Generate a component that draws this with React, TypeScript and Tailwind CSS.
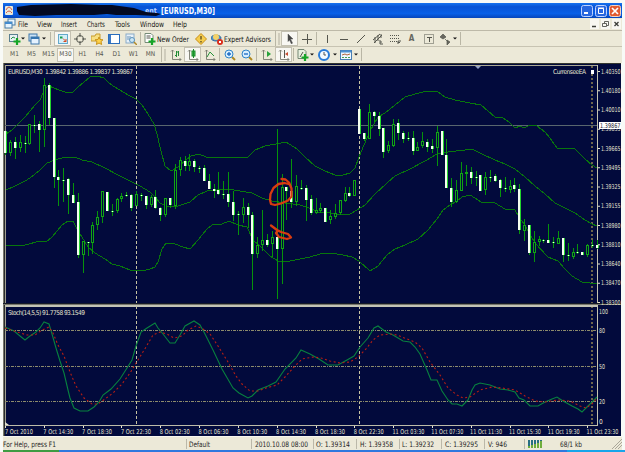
import React from "react";

type Candle = [number, number, number, number, 0 | 1];

// Each candle: high, body top, body bottom, low, filled.
const candles: Candle[] = [
  [131, 131, 153, 155, 1], [140, 142, 153, 156, 0], [137, 142, 148, 159, 1], [135, 142, 148, 152, 0],
  [136, 143, 144, 153, 1], [124, 124, 144, 145, 0], [115, 125, 126, 133, 1], [121, 124, 130, 152, 1],
  [78, 85, 130, 147, 0], [83, 85, 118, 125, 1], [118, 118, 177, 188, 1], [170, 177, 180, 206, 1],
  [168, 180, 181, 202, 1], [178, 179, 195, 214, 1], [183, 195, 203, 203, 1], [193, 202, 255, 258, 1],
  [241, 241, 255, 273, 0], [242, 242, 243, 256, 1], [222, 225, 243, 254, 0], [211, 217, 225, 230, 0],
  [191, 191, 217, 223, 0], [192, 192, 211, 211, 1], [204, 211, 212, 216, 1], [198, 199, 211, 213, 0],
  [193, 196, 199, 202, 0], [192, 195, 196, 197, 1], [194, 195, 208, 211, 1], [191, 194, 206, 206, 0],
  [193, 195, 196, 201, 1], [196, 196, 205, 209, 1], [195, 197, 205, 207, 0], [190, 197, 208, 209, 1],
  [207, 208, 215, 221, 1], [198, 198, 215, 217, 0], [198, 198, 205, 208, 1], [164, 170, 206, 209, 0],
  [157, 160, 170, 176, 0], [156, 161, 166, 171, 1], [154, 161, 166, 171, 0], [159, 161, 167, 172, 1],
  [166, 168, 169, 173, 1], [165, 168, 181, 181, 1], [174, 181, 189, 189, 1], [184, 189, 191, 198, 1],
  [172, 190, 194, 195, 1], [181, 194, 195, 199, 1], [172, 194, 202, 207, 1], [191, 202, 215, 221, 1],
  [211, 214, 215, 235, 1], [198, 207, 215, 223, 0], [203, 207, 215, 228, 1], [212, 215, 254, 290, 1],
  [237, 245, 254, 258, 0], [210, 240, 245, 251, 0], [234, 240, 245, 247, 1], [231, 237, 244, 257, 0],
  [129, 237, 249, 299, 1], [174, 187, 249, 284, 0], [187, 187, 191, 220, 1], [159, 191, 202, 208, 1],
  [175, 186, 202, 206, 0], [180, 188, 189, 190, 1], [185, 188, 200, 221, 1], [195, 199, 213, 215, 1],
  [198, 210, 213, 214, 0], [203, 208, 211, 213, 0], [208, 208, 222, 222, 1], [210, 216, 220, 224, 0],
  [204, 213, 217, 219, 0], [200, 200, 213, 215, 0], [187, 193, 201, 202, 0], [187, 193, 196, 197, 1],
  [180, 180, 196, 196, 0], [109, 109, 134, 134, 1], [133, 133, 139, 141, 1], [104, 112, 139, 139, 0],
  [111, 112, 116, 122, 1], [112, 116, 129, 136, 1], [128, 128, 152, 158, 1], [141, 145, 151, 153, 0],
  [119, 124, 146, 147, 0], [119, 123, 133, 140, 1], [131, 133, 139, 143, 1], [132, 138, 139, 141, 1],
  [131, 138, 151, 155, 1], [142, 147, 151, 151, 0], [132, 141, 146, 148, 0], [139, 142, 147, 152, 1],
  [139, 146, 149, 153, 1], [126, 132, 148, 166, 0], [131, 131, 155, 155, 1], [139, 155, 188, 188, 1],
  [178, 188, 202, 207, 1], [180, 190, 202, 203, 0], [162, 173, 191, 191, 0], [165, 172, 174, 186, 0],
  [167, 172, 178, 184, 1], [171, 177, 178, 186, 1], [175, 175, 191, 191, 1], [172, 177, 190, 195, 0],
  [170, 177, 178, 182, 1], [174, 176, 181, 182, 1], [179, 180, 188, 197, 1], [177, 188, 189, 192, 1],
  [180, 186, 190, 193, 0], [178, 185, 189, 192, 1], [184, 189, 230, 234, 1], [219, 225, 231, 241, 0],
  [225, 225, 253, 255, 1], [231, 242, 253, 262, 0], [236, 239, 242, 246, 0], [239, 240, 241, 243, 1],
  [224, 240, 243, 243, 1], [237, 242, 243, 248, 1], [231, 238, 244, 244, 0], [238, 238, 255, 262, 1],
  [243, 255, 256, 261, 1], [248, 252, 257, 259, 0], [244, 252, 253, 254, 1], [252, 252, 255, 255, 1],
  [244, 245, 255, 257, 0], [240, 245, 246, 248, 1], [240, 245, 248, 249, 1],
];

const upper = "6,134 12,130 18,124 25,117 30,111 36,104 40,100 43,93 45,88 49,86 54,88 59,90 65,92 73,92 78,87 84,82 90,77 97,76 104,78 108,82 113,86 120,90 128,95 136,99 142,105 148,114 154,124 157,134 160,147 165,166 171,171 178,167 186,160 191,156 199,154 206,157 218,157 230,158 248,157 255,150 265,146 276,144 286,142 297,149 305,157 315,166 325,171 335,175 343,175 350,173 355,168 359,157 364,145 370,131 378,117 385,113 395,105 405,97 415,94 427,91 437,91 445,97 455,100 470,103 481,105 488,111 495,117 503,118 509,122 515,128 520,126 524,128 530,125 537,126 545,132 550,138 554,144 558,149 570,148 575,149 585,159 592,165 597,168";
const middle = "6,190 15,186 25,181 30,178 40,170 47,163 55,160 65,157 75,157 82,160 92,162 105,168 118,175 130,181 140,186 150,192 155,197 160,203 167,206 178,206 190,202 198,195 207,191 217,190 228,189 240,191 252,193 262,198 272,201 285,203 300,205 312,209 318,212 330,213 340,215 350,214 357,210 365,205 375,194 387,183 395,176 410,169 425,161 437,154 448,152 465,150 472,149 482,154 495,160 505,164 515,169 525,177 535,186 545,194 555,203 565,208 575,213 585,220 592,224 597,226";
const lower = "6,245 13,246 25,245 40,241 46,242 52,237 62,225 68,221 73,221 77,229 82,237 88,247 95,253 105,259 112,264 120,266 130,270 142,271 150,269 155,267 158,262 162,249 166,243 175,244 183,247 190,249 198,240 207,229 212,225 222,224 229,221 238,225 247,227 253,240 262,248 270,256 278,261 290,261 300,259 310,257 320,254 330,253 343,255 352,257 359,261 370,271 378,266 387,255 395,249 405,245 418,239 428,230 437,219 443,210 450,205 457,201 462,197 470,195 475,198 481,202 495,203 505,209 515,210 519,217 525,225 535,243 548,257 558,261 565,269 572,276 582,282 590,283 597,284";
const stochMain = "5,327 14,331 20,336 25,340 30,336 36,332 40,328 44,322 49,324 52,334 56,348 60,361 64,373 68,390 70,398 74,408 80,411 88,411 94,407 99,402 103,395 111,389 120,379 127,368 132,360 136,346 141,332 147,328 155,323 158,328 163,334 170,343 175,343 180,335 185,326 194,321 200,325 205,334 213,350 222,369 233,388 239,393 248,398 252,396 258,390 268,386 276,382 285,369 296,358 301,350 310,354 319,359 328,365 338,365 347,360 354,356 360,347 368,338 374,328 378,326 386,332 393,335 403,341 410,342 415,347 420,354 427,370 431,380 437,380 442,391 448,400 452,404 457,404 462,406 468,400 472,390 475,385 480,383 490,385 500,389 508,390 515,392 519,398 524,400 530,406 538,406 545,402 552,399 557,397 563,401 572,406 578,409 582,412 587,407 592,402 597,397";
const stochSignal = "5,328 17,332 27,335 35,335 42,330 49,327 53,333 58,345 64,356 70,372 76,386 84,398 92,404 98,404 105,399 113,393 122,384 130,373 138,360 146,347 153,335 160,332 167,334 174,338 182,336 188,330 196,326 203,329 210,334 218,346 228,362 236,376 242,384 250,391 258,391 266,388 277,385 285,377 294,367 302,359 313,357 321,358 330,361 340,363 350,362 358,357 366,349 373,340 380,335 390,334 397,335 407,339 415,342 422,348 430,362 440,375 448,388 457,395 463,398 470,397 480,390 492,387 502,388 515,390 525,396 535,401 545,402 558,400 570,401 580,406 586,408 592,404 597,398";

const prices = ["1.40350", "1.40180", "1.40010", "1.39835", "1.39665", "1.39495", "1.39325", "1.39155", "1.38980", "1.38810", "1.38640", "1.38470", "1.38300"];
const times = ["7 Oct 2010", "7 Oct 14:30", "7 Oct 18:30", "7 Oct 22:30", "8 Oct 02:30", "8 Oct 06:30", "8 Oct 10:30", "8 Oct 14:30", "8 Oct 18:30", "8 Oct 22:30", "11 Oct 03:30", "11 Oct 07:30", "11 Oct 11:30", "11 Oct 15:30", "11 Oct 19:30", "11 Oct 23:30"];

function Chart() {
  return (
    <svg width="618" height="373" viewBox="3 63 618 373" className="block shrink-0 overflow-visible" fontFamily="'DejaVu Sans Condensed','DejaVu Sans',sans-serif" fontSize="6.6" fill="#e4e2d0">
      <rect x="3" y="63" width="618" height="373" fill="#020a3c" />
      <g shapeRendering="crispEdges">
        <rect x="3" y="63" width="618" height="1" fill="#33362f" />
        <rect x="3" y="63" width="1" height="373" fill="#77776d" />
        <rect x="4" y="64" width="1" height="372" fill="#292c2c" />
        <rect x="5" y="65" width="593" height="1" fill="#aaa894" />
        <rect x="5" y="65" width="1" height="361" fill="#a09f90" />
        <rect x="597" y="65" width="1" height="361" fill="#c6c4ae" />
        <rect x="5" y="125" width="592" height="1" fill="#59666e" />
        <path d="M136.500 66V425M359.500 66V425" stroke="#c6c2a2" strokeDasharray="3 2" />
        <path d="M592 66V425" stroke="#6d654c" strokeWidth="2" strokeDasharray="2 2" />
        <path d="M5 330.500H597M5 366.500H597M5 401.500H597" stroke="#8c8b6c" strokeDasharray="3 1 1 1" />
        <g fill="none" stroke="#08760d">
          <polyline points={upper} />
          <polyline points={middle} />
          <polyline points={lower} />
        </g>
        {candles.map(([hi, top, bottom, lo, filled], i) => {
          const x = Math.floor(5.6 + i * 4.85);
          const height = Math.max(1, bottom - top);
          return (
            <g key={i}>
              <rect x={x} y={hi} width="1" height={lo - hi} fill="#06930b" />
              {filled ? (
                <>
                  <rect x={x - 1} y={top} width="3" height={height} fill="#22d52c" />
                  <rect x={height > 1 ? x - 1 : x} y={top} width={height > 1 ? 2 : 1} height={height} fill="#f5fff0" />
                </>
              ) : (
                <rect x={x - 0.5} y={top + 0.5} width="2" height={height - 1} fill="#020a3c" stroke="#10a513" />
              )}
            </g>
          );
        })}
        <rect x="3" y="303" width="618" height="1" fill="#151a28" />
        <rect x="3" y="304" width="618" height="1" fill="#77776c" />
        <rect x="5" y="305" width="593" height="2" fill="#c3c4b5" />
        <rect x="5" y="425" width="593" height="1" fill="#bdbca8" />
      </g>
      <polyline points={stochMain} fill="none" stroke="#08813f" strokeWidth="1.100" />
      <polyline points={stochSignal} fill="none" stroke="#b61e14" strokeWidth="1.100" strokeDasharray="2 2.500" />
      <g fill="none" stroke="#d83c10" strokeWidth="2.300" strokeLinecap="round" strokeLinejoin="round">
        <path d="M281.500 179l4 .5 3.500 3 2.500 6v8l-3.500 4-7 3-6 1.500-4-1-1-4 .5-6 3-6 5-4 6-1 4 1" />
        <path d="M271 225.500l6 4.500 4 2 7 2 3 3.500-4 1.500-8-2-3-4 2-2.500" />
      </g>
      <text x="8" y="74" textLength="125" xmlSpace="preserve">EURUSD,M30  1.39842 1.39886 1.39837 1.39867</text>
      <text x="553" y="74" textLength="33">CurrenseeEA</text>
      <rect x="591" y="70" width="3" height="4" fill="#fff" shapeRendering="crispEdges" />
      <path d="M475 66h6l-3 3z" fill="#95a3c5" />
      {prices.map((price, i) => (
        <g key={price}>
          <rect x="598" y={71 + i * 19.25} width="2" height="1" />
          <text x="601" y={73.5 + i * 19.25} textLength="19.500" lengthAdjust="spacingAndGlyphs">{price}</text>
        </g>
      ))}
      <rect x="599" y="122" width="22" height="7" fill="#fff" />
      <text x="600" y="127.800" textLength="20.500" lengthAdjust="spacingAndGlyphs" fill="#15172d">1.39867</text>
      <text x="8" y="315" textLength="77">Stoch(14,5,5) 91.7758 93.1549</text>
      <text x="599" y="313.500" textLength="9" lengthAdjust="spacingAndGlyphs">100</text>
      <text x="599" y="332.500" textLength="6" lengthAdjust="spacingAndGlyphs">80</text>
      <text x="599" y="368.500" textLength="6" lengthAdjust="spacingAndGlyphs">50</text>
      <text x="599" y="403.500" textLength="6" lengthAdjust="spacingAndGlyphs">20</text>
      <text x="599" y="424">0</text>
      <path d="M5 422l4 3h-4z" />
      {times.map((time, i) => (
        <g key={time}>
          <rect x={Math.floor(5.6 + i * 38.8)} y="426" width="1" height="2" />
          <text x={(i === 0 ? 5 : 4.5) + i * 38.8} y="433.500" textLength={i === 0 ? 28 : i > 9 ? 32 : 30} lengthAdjust="spacingAndGlyphs">{time}</text>
        </g>
      ))}
    </svg>
  );
}

function Icon({ children, w = "w-[17px]", pressed = false }: { children: React.ReactNode; w?: string; pressed?: boolean }) {
  return (
    <span className={`${w} flex h-[15px] shrink-0 items-center justify-center ${pressed ? "border border-[#c4c1b2] bg-[#f8f7f2]" : ""}`}>
      <svg width="12" height="12" viewBox="0 0 12 12" className="shrink-0" fill="none" stroke="#55564e">{children}</svg>
    </span>
  );
}

const Arrow = () => (
  <span className="flex w-[4px] shrink-0 justify-center"><svg width="4" height="3"><path d="M0 .5h4l-2 2z" fill="#111" /></svg></span>
);
const Sep = ({ w = "w-[3px]" }: { w?: string }) => (
  <span className={`${w} flex shrink-0 justify-center`}><span className="h-[13px] w-px bg-[#b9b6a5]" /></span>
);
const Grip = ({ w = "w-[8px]" }: { w?: string }) => (
  <span className={`${w} flex shrink-0 items-center justify-center gap-[2px]`}>
    <span className="h-[15px] w-px bg-[#b9b6a5]" /><span className="h-[12px] w-[2px] bg-[#cfccbc]" />
  </span>
);

const Plus = () => <path d="M8 5v7M4.500 8.500h7" stroke="#16a526" strokeWidth="2.200" />;
const Axes = () => <path d="M2.500 1v9.500H11M1 2.500l1.500-1.500L4 2.500M9.500 9l1.500 1.500L9.500 12" stroke="#77786d" strokeWidth=".9" />;

function Lens({ sign }: { sign: string }) {
  return <><path d="M8 8l3 3" stroke="#b08a20" strokeWidth="2" /><circle cx="5" cy="5" r="4" fill="#d8efff" stroke="#3184c8" /><path d={sign} stroke="#1968c2" strokeWidth="1.300" /></>;
}

function DrawingTools() {
  return (
    <div className="flex h-4 shrink-0 items-center border-t border-[#bdb9a8] pl-[5px]">
      <Icon w="w-[13px]"><rect x=".5" y="1.500" width="8" height="7" fill="#e8f1f3" stroke="#5b8090" /><path d="M2 6l2-2 2 1" stroke="#29904a" /><Plus /></Icon>
      <Arrow />
      <Icon w="w-[17px]"><rect x="1" y="1" width="8" height="7" fill="#cbe2f5" stroke="#3c77aa" /><rect x="3" y="4" width="8" height="7" fill="#e5f2ff" stroke="#3c77aa" /><path d="M3 5h8" stroke="#3575b0" strokeWidth="2" /></Icon>
      <Arrow />
      <Sep w="w-[8px]" />
      <Icon pressed><rect x="1.500" y="1.500" width="9" height="9" fill="#d4eff9" stroke="#64a9cb" /><path d="M3 3.500h2.500v2H3z" fill="#199b4b" stroke="none" /><path d="M6 5.500l3 3M9 6v2.500H6.500" stroke="#d74920" /></Icon>
      <Icon><circle cx="6" cy="6" r="3.500" /><path d="M6 0v4M6 8v4M0 6h4M8 6h4" /></Icon>
      <Icon><path d="M0 3h4l1-2h4v7H0z" fill="#f7df82" stroke="#c79b2d" /><path d="M8 4l1 2.500 3 .3-2 1.700.6 3L8 10l-2.600 1.500.6-3-2-1.700 3-.3z" fill="#ffd34c" stroke="#c99318" /></Icon>
      <Icon><rect x=".5" y="1.500" width="11" height="9" fill="#fff" stroke="#296dbd" /><path d="M2 2v8" stroke="#3a78c5" strokeWidth="2" /></Icon>
      <Icon><rect x="1" y="1" width="8" height="9" fill="#e7f1fa" stroke="#8aabc7" /><path d="M3 3v4M5 3v3" stroke="#6c93b4" /><circle cx="7" cy="7" r="2.500" fill="#cce7f5" stroke="#5a91bb" /><path d="M9 9l3 3" stroke="#b18a29" strokeWidth="1.500" /></Icon>
      <Sep />
      <Icon w="w-[15px]"><path d="M1 .5h6l2 2v7H1z" fill="#fff" stroke="#768b78" /><path d="M2.500 3h4M2.500 5h4" /><Plus /></Icon>
      <span className="w-[35px] shrink-0"><svg width="34" height="10" className="block overflow-visible"><text x="0" y="7.500" fontSize="7.600" fill="#111" textLength="32" lengthAdjust="spacingAndGlyphs">New Order</text></svg></span>
      <Icon><path d="M6 .5L11.500 6 6 11.500.5 6z" fill="#f5cd4d" stroke="#c88d16" /><path d="M6 3v3.500M6 8v1.500" stroke="#6b5a26" strokeWidth="1.500" /></Icon>
      <Icon w="w-[15px]"><ellipse cx="5" cy="5" rx="5" ry="3" fill="#4f93cf" stroke="#376c9b" /><circle cx="5" cy="4" r="3" fill="#f4d168" stroke="none" /><circle cx="9" cy="9" r="3" fill="#db2e1d" stroke="none" /><path d="M8 8h2v2H8z" fill="#fff" stroke="none" /></Icon>
      <span className="w-[49px] shrink-0"><svg width="49" height="10" className="block overflow-visible"><text x="0" y="7.500" fontSize="7.600" fill="#111" textLength="47" lengthAdjust="spacingAndGlyphs">Expert Advisors</text></svg></span>
      <Grip />
      <Icon pressed><path d="M4 1l5 5H6.500l2 4-1 1-2-4L4 8.500z" fill="#444" stroke="#555" strokeWidth=".5" /></Icon>
      <Icon><path d="M6.500 1v10M1 6.500h10" /></Icon>
      <Sep />
      <Icon><path d="M6.500 2v8" /></Icon>
      <Icon><path d="M2 6.500h8" /></Icon>
      <Icon><path d="M2 10l8-8" /></Icon>
      <Icon><path d="M1 7l7-6M2 10l8-8M3 4v6M6 2v6M9 1v4M8 7v4h3M8 9h2" /></Icon>
      <Icon><path d="M1 2.500h10M1 5.500h10M1 8.500h7" strokeDasharray="1 1" /><path d="M9 11V8h3M9 9.500h2" /></Icon>
      <span className="w-[17px] text-center text-[8px] font-bold text-[#65665f]">A</span>
      <Icon><rect x="1.500" y="1.500" width="9" height="9" strokeDasharray="1 1" /><path d="M4 4.500h5M6.500 4v5" /></Icon>
      <Icon w="w-[16px]"><path d="M4 1l3 3-3 2-3-2zM6 6l3 3M8 7l3 2-3 3z" fill="#68675f" strokeWidth=".7" /></Icon>
      <Arrow />
      <Sep w="w-[6px]" />
    </div>
  );
}

function TimeframeTools() {
  return (
    <div className="flex h-4 shrink-0 items-center border-t border-[#c7c3b2] pl-px">
      <Grip w="w-[2px]" />
      {["M1", "M5", "M15", "M30", "H1", "H4", "D1", "W1", "MN"].map((label) => (
        <span key={label} className={`flex h-[14px] w-[17px] shrink-0 items-center justify-center text-[6.500px] text-[#55554d] ${label === "M30" ? "border border-[#c4c1b2] bg-[#f8f7f2]" : ""}`}>{label}</span>
      ))}
      <Grip />
      <Icon><Axes /><path d="M6.500 2v6M5 6.500h1.500M8.500 2v5M6.500 3h2" stroke="#238b35" /></Icon>
      <Icon pressed><Axes /><rect x="5" y="2" width="3" height="5" fill="#44bf51" stroke="#198d2a" /><path d="M6.500 0v9" stroke="#198d2a" /></Icon>
      <Icon><Axes /><path d="M3 8l3-5 4 4" stroke="#28933a" /></Icon>
      <Sep />
      <Icon><Lens sign="M5 3v4M3 5h4" /></Icon>
      <Icon><Lens sign="M3 5h4" /></Icon>
      <Sep />
      <Icon><Axes /><path d="M6 2l4 3-4 3z" fill="#27a23b" stroke="none" /></Icon>
      <Icon pressed><Axes /><path d="M6.500 1v8" /><path d="M7 5l3-2v4z" fill="#c74c31" stroke="none" /></Icon>
      <Sep />
      <Icon w="w-[15px]"><path d="M1 .5h6l2 2v7H1z" fill="#e9f0df" stroke="#758774" /><path d="M3 8l3-5" /><Plus /></Icon>
      <Arrow />
      <Icon w="w-[19px]"><circle cx="6" cy="6" r="5" fill="#f4fbff" stroke="#277bda" strokeWidth="2" /><path d="M6 3v3h2" stroke="#555" /></Icon>
      <Arrow />
      <Icon><rect x=".5" y="1.500" width="11" height="9" fill="#eef7ff" stroke="#487fb5" /><path d="M1 2.500h10" stroke="#4b91d2" strokeWidth="2" /><path d="M2 6l3-1 2 1 3-1" stroke="#b0653c" /><path d="M2 8.500h8" stroke="#4a9d52" strokeDasharray="2 1" /></Icon>
      <Arrow />
      <Sep w="w-[6px]" />
    </div>
  );
}

function StatusCell({ className, children }: { className: string; children: React.ReactNode }) {
  return <div className={`${className} flex h-[10px] shrink-0 items-center border-r border-[#bbb8a9] whitespace-nowrap`}>{children}</div>;
}

function StatusText({ text, width }: { text: string; width: number }) {
  return <svg width={width} height="10" className="block shrink-0 overflow-visible"><text x="0" y="7.800" fontSize="7.500" fill="#24241e" textLength={width} lengthAdjust="spacingAndGlyphs">{text}</text></svg>;
}

export default function App() {
  return (
    <div className="flex h-[452px] w-[625px] flex-col overflow-hidden bg-[#f8faf7] px-[3px] pt-[3px] font-['DejaVu_Sans_Condensed','DejaVu_Sans',sans-serif]">
      <div className="flex h-[15px] w-[619px] shrink-0 items-center bg-[linear-gradient(#1673ef,#0753d5_25%,#0860e7_70%,#0646bb)]">
        <svg width="214" height="15" className="block shrink-0 overflow-visible">
          <rect x="2" y="3" width="8" height="9" rx="1" fill="#e7eadb" /><path d="M3 7q3-6 6 0M3 10q3-4 6 0" fill="none" stroke="#d65d43" />
          <text x="142" y="10" fontSize="7" fontWeight="bold" fill="#c1d8ff">ent</text>
          <path d="M14 4l14-2 40-1 29 1 12 0 22 3 12 4 11 1 4 1-5 2-20-1-20 0-9-1-13 1H53l-21 1-16-1-2-4z" fill="#020922" />
          <text x="158" y="11" fontSize="9" fontWeight="bold" fill="white" textLength="54" lengthAdjust="spacingAndGlyphs">[EURUSD,M30]</text>
        </svg>
        <div className="ml-auto flex gap-[2px] pr-px">
          <svg width="12" height="12"><rect x=".5" y=".5" width="11" height="11" rx="2" fill="#2867df" stroke="#bfd3ff" /><path d="M3 8h4" stroke="white" strokeWidth="2" /></svg>
          <svg width="12" height="12"><rect x=".5" y=".5" width="11" height="11" rx="2" fill="#2867df" stroke="#bfd3ff" /><path d="M3.500 3.500h5v5h-5zM3 3h6" fill="none" stroke="white" /></svg>
          <svg width="12" height="12"><rect x=".5" y=".5" width="11" height="11" rx="2" fill="#e15b31" stroke="#f5d3c0" /><path d="M3 3l6 6M9 3L3 9" stroke="white" strokeWidth="1.700" /></svg>
        </div>
      </div>
      <div className="flex h-3 w-[619px] shrink-0 items-center bg-[#ece9d8]">
        <svg width="200" height="12" className="block shrink-0 overflow-visible" fontSize="7.600" fill="#171713">
          <rect x="5" y="1" width="7" height="6" fill="#e6f5ff" stroke="#477da8" /><rect x="2" y="4" width="7" height="6" fill="#e6f5ff" stroke="#477da8" /><path d="M2 5h7" stroke="#438cce" strokeWidth="2" />
          <text x="15" y="9" textLength="10" lengthAdjust="spacingAndGlyphs">File</text>
          <text x="34" y="9" textLength="15" lengthAdjust="spacingAndGlyphs">View</text>
          <text x="58" y="9" textLength="16" lengthAdjust="spacingAndGlyphs">Insert</text>
          <text x="84" y="9" textLength="18" lengthAdjust="spacingAndGlyphs">Charts</text>
          <text x="112" y="9" textLength="15" lengthAdjust="spacingAndGlyphs">Tools</text>
          <text x="137" y="9" textLength="24" lengthAdjust="spacingAndGlyphs">Window</text>
          <text x="170" y="9" textLength="14" lengthAdjust="spacingAndGlyphs">Help</text>
        </svg>
        <div className="ml-auto flex gap-[2px] pr-px">
          <svg width="9" height="10"><rect width="9" height="10" fill="#f8f7f1" /><path d="M2 7.500h4" stroke="#3c3d39" strokeWidth="1.500" /></svg>
          <svg width="9" height="10"><rect width="9" height="10" fill="#f8f7f1" /><path d="M3.500 4V2.500h4v4H6M1.500 4.500h4v3h-4z" fill="none" stroke="#3c3d39" strokeWidth=".8" /></svg>
          <svg width="9" height="10"><rect width="9" height="10" fill="#f8f7f1" /><path d="M2.500 3l4 4M6.500 3l-4 4" stroke="#3c3d39" strokeWidth="1.300" /></svg>
        </div>
      </div>
      <div className="w-[619px] shrink-0 bg-[#ece9d8] pb-px"><DrawingTools /><TimeframeTools /></div>
      <Chart />
      <div className="flex h-[14px] w-[619px] shrink-0 items-center border-t border-[#f8f7ef] bg-[#ece9d8]">
        <StatusCell className="w-[184px]"><StatusText text="For Help, press F1" width={53} /></StatusCell>
        <StatusCell className="w-[65px] pl-[2px]"><StatusText text="Default" width={21} /></StatusCell>
        <StatusCell className="w-[62px] pl-[3px]"><StatusText text="2010.10.08 08:00" width={53} /></StatusCell>
        <StatusCell className="w-[43px] pl-[2px]"><StatusText text="O: 1.39314" width={34} /></StatusCell>
        <StatusCell className="w-[43px] pl-[3px]"><StatusText text="H: 1.39358" width={33} /></StatusCell>
        <StatusCell className="w-[42px] pl-[2px]"><StatusText text="L: 1.39232" width={32} /></StatusCell>
        <StatusCell className="w-[43px] pl-[3px]"><StatusText text="C: 1.39295" width={33} /></StatusCell>
        <StatusCell className="w-[40px] pl-[3px]"><StatusText text="V: 946" width={19} /></StatusCell>
        <svg width="25" height="10" className="block shrink-0"><path d="M4 1v8M7 1v8M10 1v8M13 1v8M16 1v8" stroke="#276f83" strokeWidth="2" /><path d="M4 7v2M7 6v3M10 5v4M13 4v5M16 2v7" stroke="#6fae3c" strokeWidth="2" /></svg>
        <div className="ml-[10px]"><StatusText text="68/1 kb" width={22} /></div>
        <svg width="11" height="11" className="ml-auto block"><path d="M1 11L11 1M4 11l7-7M7 11l4-4" stroke="#aaa799" /></svg>
      </div>
      <div className="flex h-[2px] w-[622px] shrink-0 bg-[#2f78df]"><span className="w-[56px] bg-[#3f9b43]" /><span className="ml-auto w-[58px] bg-[#18a5ea]" /></div>
    </div>
  );
}
